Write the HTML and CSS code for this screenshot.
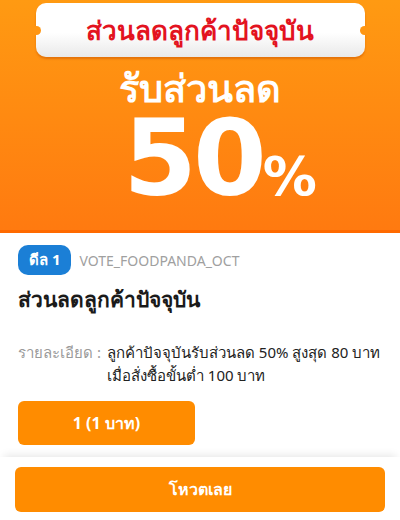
FILE: index.html
```html
<!DOCTYPE html>
<html lang="th">
<head>
  <meta charset="UTF-8" />
  <meta name="viewport" content="width=device-width, initial-scale=1.0" />
  <title>ส่วนลดลูกค้าปัจจุบัน</title>
  <link rel="stylesheet" href="styles.css">
</head>
<body>
  <div class="banner">
    <div class="ticket">
      <span class="ticket-text">ส่วนลดลูกค้าปัจจุบัน</span>
    </div>
    <div class="banner-sub">รับส่วนลด</div>
    <div class="banner-big">50<span class="pct">%</span></div>
  </div>

  <div class="content">
    <div class="code-row">
      <span class="badge">ดีล 1</span>
      <span class="code">VOTE_FOODPANDA_OCT</span>
    </div>
    <h1 class="title">ส่วนลดลูกค้าปัจจุบัน</h1>
    <div class="detail">
      <span class="detail-label">รายละเอียด :</span>
      <span class="detail-text">ลูกค้าปัจจุบันรับส่วนลด 50% สูงสุด 80 บาท เมื่อสั่งซื้อขั้นต่ำ 100 บาท</span>
    </div>
    <button class="option">1 (1 บาท)</button>
  </div>

  <div class="footer">
    <button class="vote">โหวตเลย</button>
  </div>
</body>
</html>
```

FILE: styles.css
```css
body {
  margin: 0;
  width: 400px;
  height: 520px;
  overflow: hidden;
  background: #fff;
  font-family: 'Noto Sans', 'DejaVu Sans', sans-serif;
  color: #222;
}
.banner {
  height: 230px;
  background: linear-gradient(#ff9a12, #ff7a10);
  border-bottom: 3px solid #ff6a00;
  display: flex;
  flex-direction: column;
  align-items: center;
}
.ticket {
  position: relative;
  margin-top: 3px;
  width: 329px;
  height: 54px;
  border-radius: 10px;
  background: linear-gradient(#ffffff 55%, #e9e9e9);
  box-shadow: 0 2px 2px #c9560080;
  display: flex;
  align-items: center;
  justify-content: center;
}
.ticket::before,
.ticket::after {
  content: '';
  position: absolute;
  top: 23px;
  width: 9px;
  height: 9px;
  border-radius: 50%;
  background: #ff9612;
}
.ticket::before { left: -4px; }
.ticket::after { right: -4px; }
.ticket-text {
  color: #e3131f;
  font-size: 26px;
  font-weight: bold;
}
.banner-sub {
  margin-top: 10px;
  color: #fff;
  font-size: 38px;
  font-weight: bold;
  line-height: 40px;
}
.banner-big {
  margin-top: 12px;
  margin-left: 40px;
  color: #fff;
  font-family: 'DejaVu Sans', sans-serif;
  font-weight: bold;
  font-size: 106px;
  line-height: 80px;
  letter-spacing: -4px;
}
.pct {
  font-size: 54px;
  letter-spacing: 0;
}
.content {
  padding: 12px 18px 0;
  height: 212px;
}
.code-row {
  display: flex;
  align-items: center;
  gap: 8px;
}
.badge {
  background: #1b7fd6;
  color: #fff;
  font-weight: bold;
  font-size: 15px;
  padding: 3px 11px;
  border-radius: 10px;
}
.code {
  color: #a0a0a0;
  font-size: 14px;
}
.title {
  margin: 8px 0 0;
  font-size: 21px;
  font-weight: bold;
  color: #1a1a1a;
}
.detail {
  display: flex;
  gap: 6px;
  margin-top: 25px;
  font-size: 15px;
  line-height: 23px;
}
.detail-label {
  color: #9a9a9a;
  white-space: nowrap;
}
.detail-text {
  color: #222;
}
.option {
  display: block;
  margin-top: 14px;
  width: 177px;
  height: 44px;
  border: none;
  border-radius: 6px;
  background: #ff8c00;
  color: #fff;
  font-family: inherit;
  font-size: 16px;
  font-weight: bold;
}
.footer {
  box-shadow: 0 -6px 8px -4px #00000018;
  padding: 10px 15px;
  background: #fff;
}
.vote {
  display: block;
  width: 100%;
  height: 45px;
  border: none;
  border-radius: 6px;
  background: #ff8c00;
  color: #fff;
  font-family: inherit;
  font-size: 16px;
  font-weight: bold;
}
```
